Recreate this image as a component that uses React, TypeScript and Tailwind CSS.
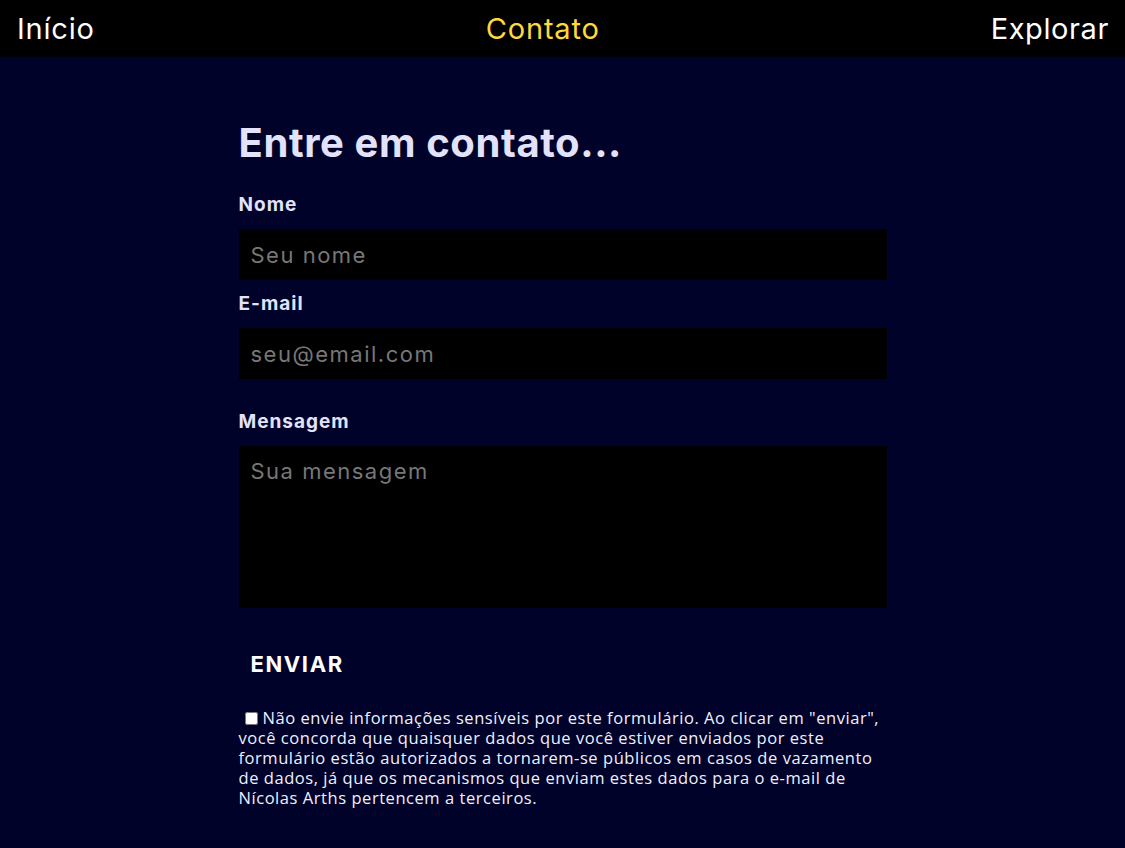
import React from 'react';

const font = { fontFamily: 'Inter, "Noto Sans", sans-serif' };

export default function App() {
  return (
    <div className="min-h-screen bg-[#00022a] text-white" style={font}>
      {/* Navigation */}
      <nav className="h-[57px] bg-black flex items-center justify-between pl-[17px] pr-4">
        <a className="text-[29px] tracking-[0.8px] text-white">Início</a>
        <a className="text-[29px] tracking-[0.8px] text-[#ffd93b]">Contato</a>
        <a className="text-[29px] tracking-[0.6px] text-white">Explorar</a>
      </nav>

      <main className="w-[648px] mx-auto pt-[63px]">
        <h1 className="text-[40px] font-bold text-[#e2e2fb] leading-[46px] tracking-[0.6px]">Entre em contato...</h1>

        <form className="mt-[27px] flex flex-col">
          <label className="text-[19px] font-bold text-[#e2e2fb] leading-[24px] tracking-[1px] mb-[12px]">Nome</label>
          <input
            className="h-[51px] bg-black px-3 text-[22px] tracking-[1.5px] text-white placeholder:text-[#777] outline-none"
            placeholder="Seu nome"
          />

          <label className="text-[19px] font-bold text-[#e2e2fb] leading-[24px] tracking-[1px] mt-[12px] mb-[12px]">E-mail</label>
          <input
            className="h-[51px] bg-black px-3 text-[22px] tracking-[1.5px] text-white placeholder:text-[#777] outline-none"
            placeholder="seu@email.com"
          />

          <label className="text-[19px] font-bold text-[#e2e2fb] leading-[24px] tracking-[1px] mt-[31px] mb-[12px]">Mensagem</label>
          <textarea
            className="h-[162px] bg-black px-3 py-[9px] text-[22px] tracking-[1.5px] text-white placeholder:text-[#777] outline-none resize-none"
            placeholder="Sua mensagem"
          />

          <button type="button" className="self-start mt-[42px] px-3 text-[22px] font-bold tracking-[1.6px] text-white leading-[28px]">
            ENVIAR
          </button>

          <p
            className="mt-[30px] text-[16.5px] leading-[20px] tracking-[0.55px] text-[#f0f0ff]"
            style={{ fontFamily: '"Open Sans", sans-serif' }}
          >
            <input type="checkbox" className="ml-[6px] mr-[5px] w-[13px] h-[13px] align-[-1px]" />
            Não envie informações sensíveis por este formulário. Ao clicar em "enviar", você concorda que quaisquer dados que
            você estiver enviados por este formulário estão autorizados a tornarem-se públicos em casos de vazamento de dados,
            já que os mecanismos que enviam estes dados para o e-mail de Nícolas Arths pertencem a terceiros.
          </p>
        </form>
      </main>
    </div>
  );
}
